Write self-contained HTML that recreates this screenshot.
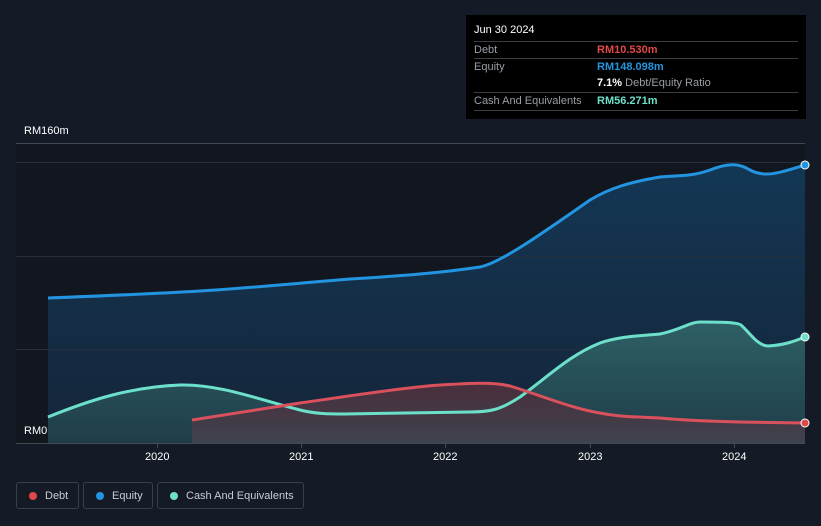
<!DOCTYPE html>
<html><head><meta charset="utf-8"><style>
html,body{margin:0;padding:0;background:#151b26;width:821px;height:526px;overflow:hidden;font-family:"Liberation Sans",sans-serif;}
.tip{position:absolute;left:466px;top:15px;width:340px;height:104px;background:#000;}
.tip .h{position:absolute;left:8px;top:9px;color:#fff;font-size:11px;}
.row{position:absolute;left:8px;width:324px;border-top:1px solid #3a3d44;height:17px;font-size:11px;line-height:17px;color:#9a9ea6;}
.row b{position:absolute;left:123px;font-weight:bold;}
.lbl{position:absolute;color:#fff;font-size:11px;}
.leg{position:absolute;top:482px;height:27px;border:1px solid #3a3f4a;border-radius:3px;color:#c8ccd2;font-size:11px;line-height:27px;box-sizing:border-box;}
.leg i{position:absolute;left:12px;top:9px;width:8px;height:8px;border-radius:50%;}
.leg span{position:absolute;left:28px;}
</style></head><body>
<svg width="821" height="526" style="position:absolute;left:0;top:0">
<defs>
<linearGradient id="eq" x1="0" y1="0" x2="0" y2="1"><stop offset="0" stop-color="#133754"/><stop offset="1" stop-color="#152539"/></linearGradient>
<linearGradient id="ca" x1="0" y1="0" x2="0" y2="1"><stop offset="0" stop-color="#2e6066"/><stop offset="1" stop-color="#1f3d48"/></linearGradient>
<linearGradient id="de" x1="0" y1="0" x2="0" y2="1"><stop offset="0" stop-color="#4a2e3c"/><stop offset="1" stop-color="#3e434d"/></linearGradient>
</defs>
<rect x="16" y="143" width="789" height="300" fill="#12161f"/>
<line x1="16" y1="143.5" x2="805" y2="143.5" stroke="#444953"/>
<path d="M48 298 C100 296 150 294 200 291 C250 288 300 283 350 279 C400 276 440 273 480 267 C500 263 540 235 590 200 C610 188 630 182 660 177 C680 175 690 177 710 170 C730 162 740 164 750 170 C765 178 780 173 805 165 L805 443 L48 443Z" fill="url(#eq)"/>
<g stroke="#26303c" stroke-width="1"><line x1="16" y1="162.5" x2="805" y2="162.5"/><line x1="16" y1="256.5" x2="805" y2="256.5"/><line x1="16" y1="349.5" x2="805" y2="349.5"/></g>
<path d="M48 417 C90 400 130 387 180 385 C220 384 260 400 300 410 C315 414 330 414 345 414 L470 412 C490 412 500 410 520 397 C550 375 570 355 600 343 C620 336 640 336 660 334 C680 330 690 322 700 322 C720 322 740 322 742 326 C750 333 758 346 768 346 C785 345 795 341 805 337 L805 443 L48 443Z" fill="url(#ca)"/>
<path d="M192 420 L300 403 C350 396 400 388 440 385 C460 384 490 381 510 386 C540 395 570 408 600 413 C620 417 640 417 660 418 C680 420 700 421 740 422 L805 423 L805 443 L192 443Z" fill="url(#de)"/>
<path d="M48 298 C100 296 150 294 200 291 C250 288 300 283 350 279 C400 276 440 273 480 267 C500 263 540 235 590 200 C610 188 630 182 660 177 C680 175 690 177 710 170 C730 162 740 164 750 170 C765 178 780 173 805 165" fill="none" stroke="#2394e0" stroke-width="3"/>
<path d="M48 417 C90 400 130 387 180 385 C220 384 260 400 300 410 C315 414 330 414 345 414 L470 412 C490 412 500 410 520 397 C550 375 570 355 600 343 C620 336 640 336 660 334 C680 330 690 322 700 322 C720 322 740 322 742 326 C750 333 758 346 768 346 C785 345 795 341 805 337" fill="none" stroke="#6de0cc" stroke-width="3"/>
<path d="M192 420 L300 403 C350 396 400 388 440 385 C460 384 490 381 510 386 C540 395 570 408 600 413 C620 417 640 417 660 418 C680 420 700 421 740 422 L805 423" fill="none" stroke="#d9515c" stroke-width="3"/>
<line x1="16" y1="443.5" x2="805" y2="443.5" stroke="#444953"/>
<g stroke="#444953"><line x1="157.5" y1="443" x2="157.5" y2="448"/><line x1="301.5" y1="443" x2="301.5" y2="448"/><line x1="445.5" y1="443" x2="445.5" y2="448"/><line x1="590.5" y1="443" x2="590.5" y2="448"/><line x1="734.5" y1="443" x2="734.5" y2="448"/></g>
<circle cx="805" cy="165" r="4" fill="#2394e0" stroke="#fff" stroke-width="1"/>
<circle cx="805" cy="337" r="4" fill="#6de0cc" stroke="#fff" stroke-width="1"/>
<circle cx="805" cy="423" r="4" fill="#e04848" stroke="#fff" stroke-width="1"/>
</svg>
<div class="lbl" style="left:24px;top:125px">RM160m</div>
<div class="lbl" style="left:24px;top:425px">RM0</div>
<div class="lbl" style="left:145px;top:451px">2020</div>
<div class="lbl" style="left:289px;top:451px">2021</div>
<div class="lbl" style="left:433px;top:451px">2022</div>
<div class="lbl" style="left:578px;top:451px">2023</div>
<div class="lbl" style="left:722px;top:451px">2024</div>
<div class="tip">
<div class="h">Jun 30 2024</div>
<div class="row" style="top:26px">Debt<b style="color:#e04848">RM10.530m</b></div>
<div class="row" style="top:43px">Equity<b style="color:#2394e0">RM148.098m</b></div>
<div class="row" style="top:60px;border-top:none"><b style="color:#fff">7.1%<span style="color:#9a9ea6;font-weight:normal"> Debt/Equity Ratio</span></b></div>
<div class="row" style="top:77px">Cash And Equivalents<b style="color:#6de0cc">RM56.271m</b></div>
<div class="row" style="top:95px;height:0"></div>
</div>
<div class="leg" style="left:16px;width:63px"><i style="background:#e04848"></i><span>Debt</span></div>
<div class="leg" style="left:83px;width:70px"><i style="background:#2394e0"></i><span>Equity</span></div>
<div class="leg" style="left:157px;width:147px"><i style="background:#6de0cc"></i><span>Cash And Equivalents</span></div>
</body></html>
